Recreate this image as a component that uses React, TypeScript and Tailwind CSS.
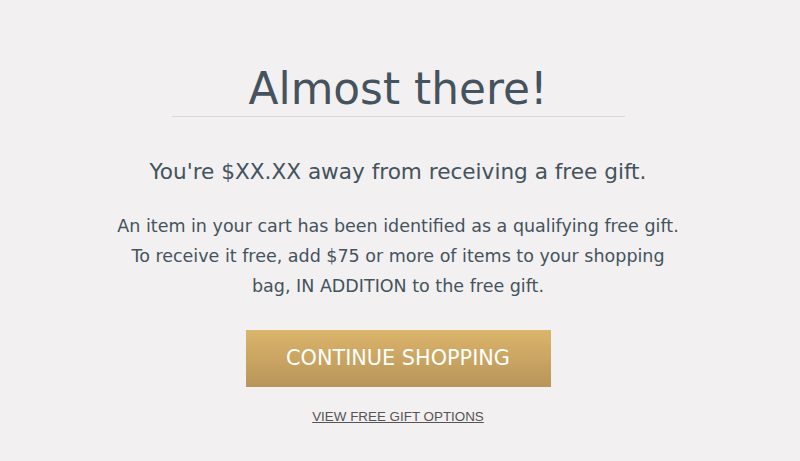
import React from 'react';

export default function App() {
  return (
    <div className="min-h-[461px] w-full bg-[#f2f0f0] text-[#44535d] font-['DejaVu_Sans',sans-serif]">
      <div className="flex flex-col items-center pt-[65px] pr-[4px]">
        <div className="w-[453px] border-b border-[#d9d9d9] pb-[3px] text-center">
          <h1 className="text-[43.8px] leading-[48px] font-normal">Almost there!</h1>
        </div>

        <p className="mt-[40px] text-[21.6px] leading-[30px]">
          You're $XX.XX away from receiving a free gift.
        </p>

        <p className="mt-[24px] w-[568px] text-center text-[17.5px] leading-[30px]">
          An item in your cart has been identified as a qualifying free gift.
          To receive it free, add $75 or more of items to your shopping
          bag, IN ADDITION to the free gift.
        </p>

        <button className="mt-[29px] flex h-[57px] w-[305px] items-center justify-center bg-gradient-to-b from-[#dcb56b] to-[#b8955a] text-[20.8px] text-white">
          CONTINUE SHOPPING
        </button>

        <a
          href="#"
          className="mt-[20px] font-['Liberation_Sans',sans-serif] text-[13.4px] text-[#555] underline"
        >
          VIEW FREE GIFT OPTIONS
        </a>
      </div>
    </div>
  );
}
